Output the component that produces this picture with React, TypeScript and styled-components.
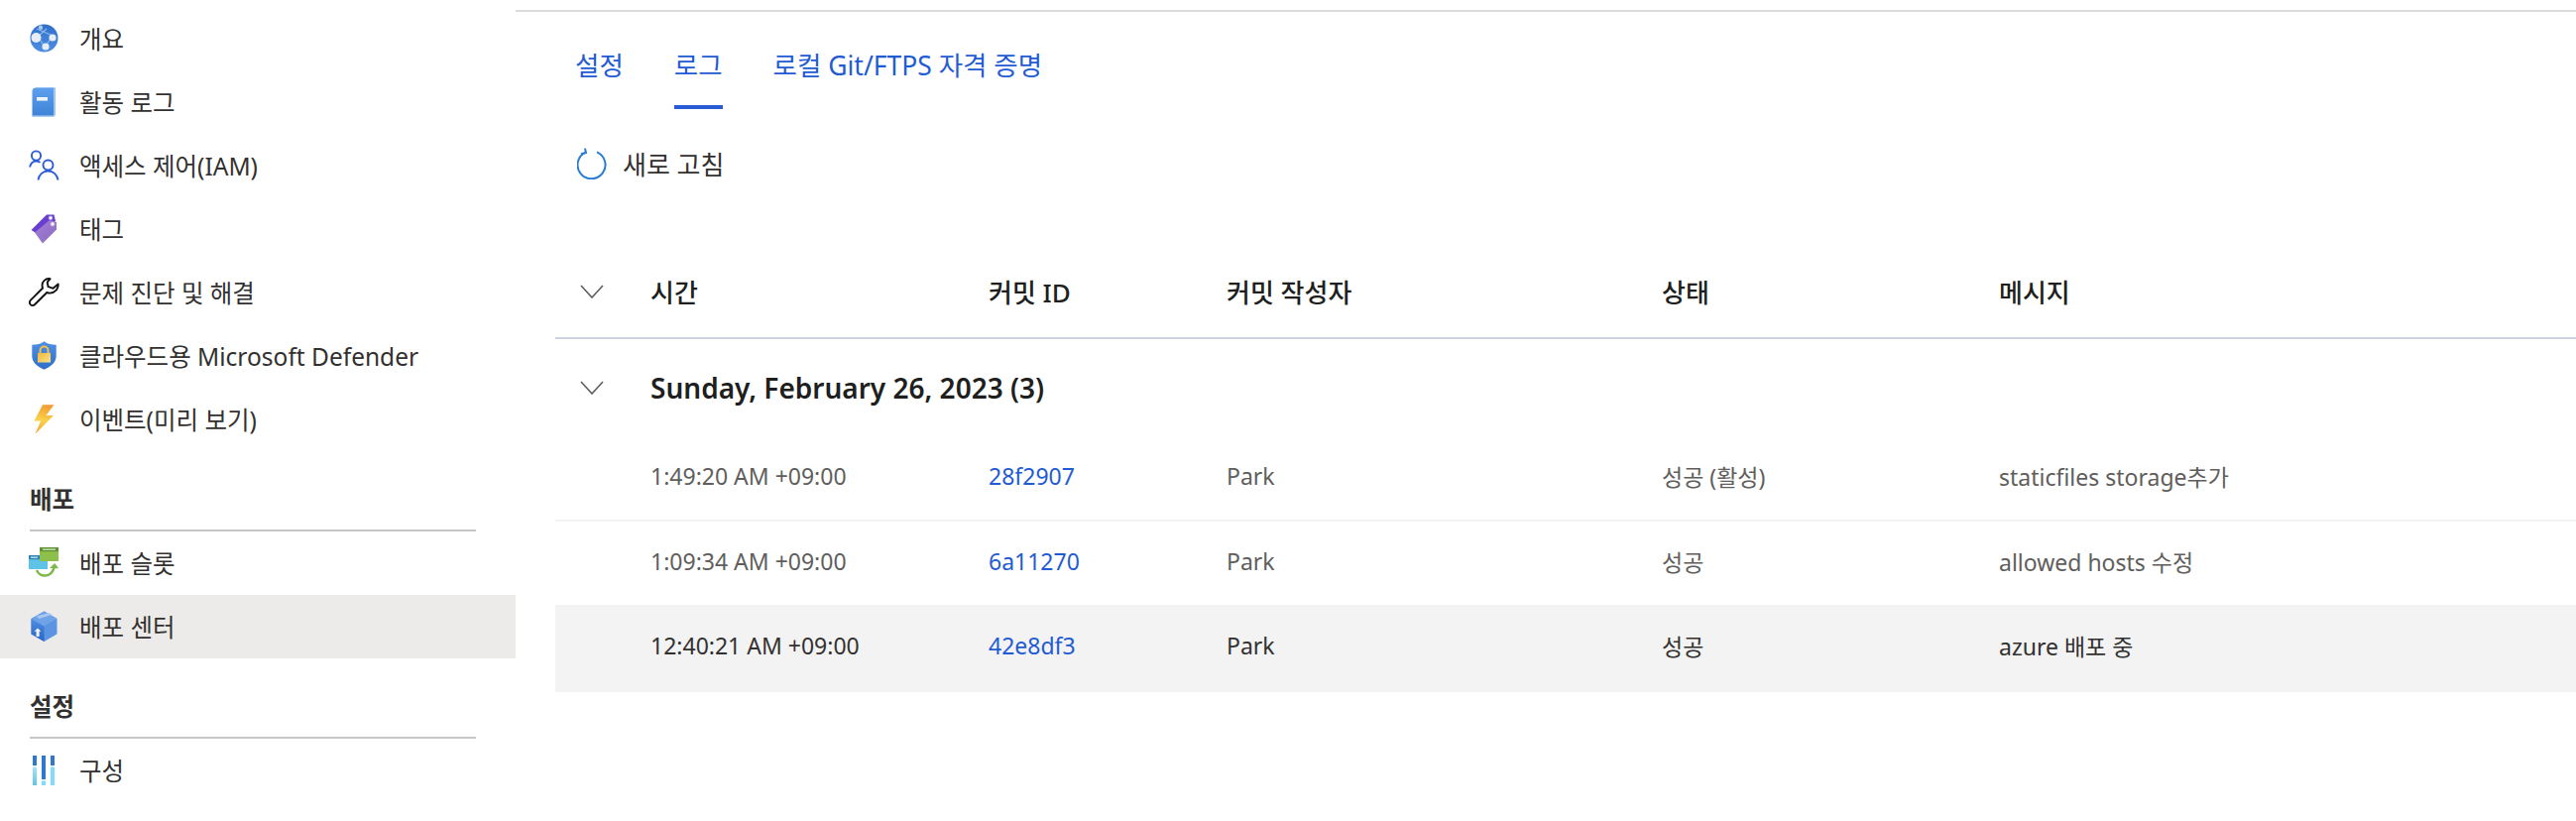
import React from 'react';
import styled, { createGlobalStyle } from 'styled-components';

const GlobalStyle = createGlobalStyle`
  html, body {
    margin: 0;
    padding: 0;
    background: #ffffff;
  }
  body {
    font-family: "Noto Sans", "Noto Sans CJK KR", sans-serif;
    color: #323130;
  }
`;

const Page = styled.div`
  display: flex;
  width: 2598px;
  height: 828px;
  overflow: hidden;
`;

const Sidebar = styled.nav`
  flex: 0 0 520px;
  padding-top: 7px;
  box-sizing: border-box;
`;

const NavItem = styled.div<{ $active?: boolean }>`
  display: flex;
  align-items: center;
  height: 64px;
  padding-left: 29px;
  padding-bottom: 1px;
  box-sizing: border-box;
  font-size: 24.5px;
  color: #323130;
  background: ${(p) => (p.$active ? '#edebe9' : 'transparent')};
`;

const NavIcon = styled.span`
  display: flex;
  align-items: center;
  justify-content: center;
  flex: 0 0 31px;
  height: 32px;
  margin-right: 20px;
`;

const SectionTitle = styled.div`
  display: flex;
  align-items: flex-end;
  box-sizing: border-box;
  height: 81px;
  margin: 0 40px 0 30px;
  padding-bottom: 14px;
  border-bottom: 2px solid #c8c6c4;
  font-size: 24.5px;
  font-weight: 700;
  color: #323130;
`;

const Main = styled.main`
  flex: 1;
  min-width: 0;
  margin-top: 10px;
  border-top: 2px solid #dcdbda;
`;

const Tabs = styled.div`
  display: flex;
  height: 98px;
  padding-left: 60px;
  box-sizing: border-box;
`;

const Tab = styled.div<{ $active?: boolean }>`
  display: flex;
  align-items: center;
  height: 98px;
  box-sizing: border-box;
  margin-right: 51px;
  padding-top: 10px;
  font-size: 26.5px;
  color: #1f5bd3;
  border-bottom: 4px solid ${(p) => (p.$active ? '#2a5bd7' : 'transparent')};
`;

const Toolbar = styled.div`
  display: flex;
  align-items: center;
  height: 110px;
  padding-left: 62px;
  font-size: 26px;
  color: #323130;
`;

const RefreshButton = styled.span`
  display: flex;
  margin-right: 16px;
`;

const Table = styled.div`
  margin-left: 40px;
`;

const columns = '96px 341px 240px 439px 340px 1fr';

const HeaderRow = styled.div`
  display: grid;
  grid-template-columns: ${columns};
  align-items: center;
  box-sizing: border-box;
  height: 122px;
  padding-top: 28px;
  border-bottom: 2px solid #cfd4dc;
  font-size: 26px;
  font-weight: 500;
  color: #201f1e;
`;

const GroupRow = styled.div`
  display: grid;
  grid-template-columns: 96px 1fr;
  align-items: center;
  height: 98px;
  font-size: 28px;
  font-weight: 600;
  color: #201f1e;
`;

const ChevronCell = styled.span`
  display: flex;
  padding-left: 25px;
`;

const Row = styled.div<{ $selected?: boolean }>`
  display: grid;
  grid-template-columns: ${columns};
  align-items: center;
  box-sizing: border-box;
  height: ${(p) => (p.$selected ? '88px' : '86px')};
  margin-top: ${(p) => (p.$selected ? '-2px' : '0')};
  padding-bottom: ${(p) => (p.$selected ? '6px' : '4px')};
  border-bottom: ${(p) => (p.$selected ? 'none' : '2px solid #f3f3f3')};
  background: ${(p) => (p.$selected ? '#f3f3f3' : 'transparent')};
  color: ${(p) => (p.$selected ? '#323130' : '#605e5c')};
  font-size: 23px;
`;

const CommitLink = styled.span`
  color: #1f5bd3;
`;

const Chevron = () => (
  <svg width="24" height="14" viewBox="0 0 24 14" fill="none">
    <path d="M1 1l11 12L23 1" stroke="#605e5c" strokeWidth="1.6" />
  </svg>
);

const RefreshIcon = () => (
  <svg width="30" height="32" viewBox="0 0 30 32" fill="none">
    <path d="M20 4.4A14 14 0 1 1 8.6 4.6" stroke="#2b7cd3" strokeWidth="2" />
    <path d="M8 0.6l1 4.4-5 1.2" stroke="#2b7cd3" strokeWidth="2" />
  </svg>
);

const GlobeIcon = () => (
  <svg width="29" height="29" viewBox="0 0 29 29">
    <defs>
      <linearGradient id="globeFill" x1="0" y1="0" x2="0" y2="1">
        <stop offset="0" stopColor="#2f6fcb" />
        <stop offset="1" stopColor="#4e8fe3" />
      </linearGradient>
    </defs>
    <circle cx="14.5" cy="14.5" r="14" fill="url(#globeFill)" />
    <path d="M7 5l16 7M7 14L17 5M9 14l6 9M15 23l8-10" stroke="#8fb7ea" strokeWidth="1.2" fill="none" />
    <circle cx="6.5" cy="14" r="5" fill="#e6edf6" />
    <circle cx="23" cy="14" r="3.6" fill="#e6edf6" />
    <circle cx="16" cy="23" r="3.6" fill="#e6edf6" />
    <circle cx="11" cy="3.8" r="2.2" fill="#a9c8ef" />
  </svg>
);

const BookIcon = () => (
  <svg width="25" height="30" viewBox="0 0 25 30">
    <defs>
      <linearGradient id="bookFill" x1="0" y1="0" x2="0" y2="1">
        <stop offset="0" stopColor="#5ea0ef" />
        <stop offset="1" stopColor="#3d82d6" />
      </linearGradient>
    </defs>
    <path d="M4 0.5h20v28h-1V1.5H4z" fill="#9cc3ec" />
    <path d="M0.5 4Q0.5 0.5 4 0.5h18.5v29H0.5z" fill="url(#bookFill)" />
    <path d="M0.5 28.5h22.5v1H0.5z" fill="#b9d5f2" />
    <rect x="5" y="10" width="11" height="3.6" fill="#eef4fb" />
  </svg>
);

const PeopleIcon = () => (
  <svg width="31" height="31" viewBox="0 0 31 31" fill="none" stroke="#2a5bd7" strokeWidth="1.9">
    <circle cx="7.5" cy="6" r="4.6" />
    <path d="M1 17.5c1-4 3.5-6 6.5-6 1.6 0 2.9.4 4 1.4" />
    <circle cx="19.5" cy="15.5" r="5" />
    <path d="M9.5 30.5c.6-5 4.5-9 10-9s9.2 4 10 9" />
  </svg>
);

const TagIcon = () => (
  <svg width="27" height="30" viewBox="0 0 27 30">
    <defs>
      <linearGradient id="tagFill" x1="0" y1="0" x2="1" y2="1">
        <stop offset="0" stopColor="#a67fd8" />
        <stop offset="1" stopColor="#8a6bc0" />
      </linearGradient>
    </defs>
    <path d="M0.5 16L16 0.5h7.5L25 7 7 20z" fill="#6a3fd0" />
    <path d="M4 18.5L19 6l7 2v7.5L12 29.5z" fill="url(#tagFill)" />
    <circle cx="20" cy="3.8" r="1.8" fill="#fff" stroke="#c9b7e6" strokeWidth="0.8" />
    <circle cx="22" cy="10" r="1.9" fill="#fff" stroke="#c9b7e6" strokeWidth="0.8" />
  </svg>
);

const WrenchIcon = () => (
  <svg width="31" height="31" viewBox="0 0 31 31" fill="none">
    <path
      d="M21.6 2.2c-4.6-.9-8.6 2.8-8 7.4.1.7.2 1.2.5 1.9L2 23.6c-1.4 1.4-1.4 3.2-.3 4.5 1.3 1.3 3.2 1.2 4.5-.1L18.3 16c4.6 1.8 9.8-.8 11.1-5.5.3-1 .4-2 .2-3l-5 4.3-5-1.6-.9-4.6z"
      stroke="#111111"
      strokeWidth="1.9"
      strokeLinejoin="round"
    />
  </svg>
);

const ShieldIcon = () => (
  <svg width="25" height="29" viewBox="0 0 25 29">
    <defs>
      <linearGradient id="shieldFill" x1="0" y1="0" x2="0" y2="1">
        <stop offset="0" stopColor="#4f8fe4" />
        <stop offset="1" stopColor="#2f6fcb" />
      </linearGradient>
      <linearGradient id="lockFill" x1="0" y1="0" x2="1" y2="1">
        <stop offset="0" stopColor="#f1b63d" />
        <stop offset="1" stopColor="#fde282" />
      </linearGradient>
    </defs>
    <path d="M12.5 0.3C9 3 5 3.8 0.3 3.8v11c0 7 5.4 11 12.2 14 6.8-3 12.2-7 12.2-14v-11C20 3.8 16 3 12.5 0.3z" fill="url(#shieldFill)" />
    <path d="M8.5 12V9.5a4 4 0 0 1 8 0V12" fill="none" stroke="#f3bf4b" strokeWidth="2" />
    <rect x="6" y="12" width="13" height="9.5" fill="url(#lockFill)" />
  </svg>
);

const BoltIcon = () => (
  <svg width="21" height="30" viewBox="0 0 21 30">
    <defs>
      <linearGradient id="boltFill" x1="0.6" y1="0" x2="0.4" y2="1">
        <stop offset="0" stopColor="#f29b33" />
        <stop offset="0.55" stopColor="#fbd24a" />
        <stop offset="1" stopColor="#f4a53a" />
      </linearGradient>
    </defs>
    <path d="M9 0.3h11.5L12.5 11H20L1.5 29.7 7 16.5H0.5z" fill="url(#boltFill)" />
  </svg>
);

const SlotIcon = () => (
  <svg width="31" height="31" viewBox="0 0 31 31">
    <rect x="0" y="8" width="19" height="14" fill="#5fc3e8" />
    <rect x="0" y="8" width="19" height="4.2" fill="#2f82b8" />
    <rect x="2" y="9.5" width="7" height="1.4" fill="#bfe3f3" />
    <rect x="11" y="0" width="19" height="14" fill="#8cc04b" />
    <rect x="11" y="0" width="19" height="4.2" fill="#5e9234" />
    <rect x="14" y="1.5" width="13" height="1.3" fill="#d8e8c0" />
    <path d="M8 23c2.5 7 15 9 18-4" fill="none" stroke="#7cb84a" strokeWidth="2.4" />
    <path d="M21 21l5.2-5 4 5.2z" fill="#7cb84a" />
  </svg>
);

const CubeIcon = () => (
  <svg width="27" height="31" viewBox="0 0 27 31">
    <defs>
      <linearGradient id="cubeSide" x1="0" y1="0" x2="0" y2="1">
        <stop offset="0" stopColor="#4f8fe0" />
        <stop offset="1" stopColor="#2a63c6" />
      </linearGradient>
    </defs>
    <path d="M13.5 0.5L26.5 8v15.5l-13 7.5-13-7.5V8z" fill="#5b94e2" />
    <path d="M0.5 8l13 7.5V31l-13-7.5z" fill="url(#cubeSide)" />
    <path d="M13.5 0.5L26.5 8l-13 7.5L0.5 8z" fill="#6ea3e8" />
    <path d="M5.5 5.5l13-3.5 3 2-13 4z" fill="#a7c7f0" />
    <path d="M7 17.5l3.4 3.2H8.6V26H5.6v-5.3H3.6z" fill="#eef4fb" />
  </svg>
);

const ConfigIcon = () => (
  <svg width="25" height="30" viewBox="0 0 25 30">
    <defs>
      <linearGradient id="barFill" x1="0" y1="0" x2="0" y2="1">
        <stop offset="0" stopColor="#a5e4f7" />
        <stop offset="1" stopColor="#5fc5e6" />
      </linearGradient>
    </defs>
    <rect x="1" y="0" width="4" height="10" fill="#2f77cf" />
    <rect x="1" y="11.5" width="4" height="18.5" fill="url(#barFill)" />
    <rect x="10" y="0" width="4" height="24" fill="#2f77cf" />
    <rect x="10" y="25.5" width="4" height="4.5" fill="#7fdcfa" />
    <rect x="19" y="0" width="4" height="10" fill="#2f77cf" />
    <rect x="19" y="11.5" width="4" height="18.5" fill="#7fdcfa" />
  </svg>
);

const topItems = [
  { label: '개요', icon: <GlobeIcon /> },
  { label: '활동 로그', icon: <BookIcon /> },
  { label: '액세스 제어(IAM)', icon: <PeopleIcon /> },
  { label: '태그', icon: <TagIcon /> },
  { label: '문제 진단 및 해결', icon: <WrenchIcon /> },
  { label: '클라우드용 Microsoft Defender', icon: <ShieldIcon /> },
  { label: '이벤트(미리 보기)', icon: <BoltIcon /> },
];

const deployments = [
  { time: '1:49:20 AM +09:00', id: '28f2907', author: 'Park', status: '성공 (활성)', message: 'staticfiles storage추가' },
  { time: '1:09:34 AM +09:00', id: '6a11270', author: 'Park', status: '성공', message: 'allowed hosts 수정' },
  { time: '12:40:21 AM +09:00', id: '42e8df3', author: 'Park', status: '성공', message: 'azure 배포 중', selected: true },
];

export default function App() {
  return (
    <Page>
      <GlobalStyle />
      <Sidebar>
        {topItems.map((item) => (
          <NavItem key={item.label}>
            <NavIcon>{item.icon}</NavIcon>
            {item.label}
          </NavItem>
        ))}
        <SectionTitle>배포</SectionTitle>
        <NavItem>
          <NavIcon><SlotIcon /></NavIcon>
          배포 슬롯
        </NavItem>
        <NavItem $active>
          <NavIcon><CubeIcon /></NavIcon>
          배포 센터
        </NavItem>
        <SectionTitle>설정</SectionTitle>
        <NavItem>
          <NavIcon><ConfigIcon /></NavIcon>
          구성
        </NavItem>
      </Sidebar>
      <Main>
        <Tabs>
          <Tab>설정</Tab>
          <Tab $active>로그</Tab>
          <Tab>로컬 Git/FTPS 자격 증명</Tab>
        </Tabs>
        <Toolbar>
          <RefreshButton><RefreshIcon /></RefreshButton>
          새로 고침
        </Toolbar>
        <Table>
          <HeaderRow>
            <ChevronCell><Chevron /></ChevronCell>
            <span>시간</span>
            <span>커밋 ID</span>
            <span>커밋 작성자</span>
            <span>상태</span>
            <span>메시지</span>
          </HeaderRow>
          <GroupRow>
            <ChevronCell><Chevron /></ChevronCell>
            <span>Sunday, February 26, 2023 (3)</span>
          </GroupRow>
          {deployments.map((d) => (
            <Row key={d.id} $selected={d.selected}>
              <span />
              <span>{d.time}</span>
              <CommitLink>{d.id}</CommitLink>
              <span>{d.author}</span>
              <span>{d.status}</span>
              <span>{d.message}</span>
            </Row>
          ))}
        </Table>
      </Main>
    </Page>
  );
}
